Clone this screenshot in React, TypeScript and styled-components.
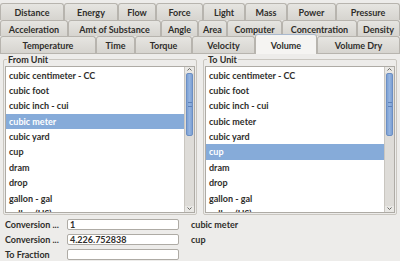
import React from 'react'
import styled, { createGlobalStyle } from 'styled-components'

const GlobalStyle = createGlobalStyle`
  html, body {
    margin: 0;
    padding: 0;
    background: #edecea;
  }
  * {
    box-sizing: border-box;
  }
`

const Window = styled.div`
  width: 400px;
  height: 261px;
  overflow: hidden;
  background: #edecea;
  font-family: Lato, 'Open Sans', sans-serif;
  font-weight: 700;
  font-size: 9px;
  color: #2f2e2b;
  display: flex;
  flex-direction: column;
  padding-top: 3px;
`

const TabRow = styled.div<{ $h: number }>`
  display: flex;
  height: ${({ $h }) => $h}px;
  position: relative;
`

const Tab = styled.div<{ $w: number; $active?: boolean }>`
  flex: 0 0 ${({ $w }) => $w}px;
  display: flex;
  align-items: center;
  justify-content: center;
  padding-top: 2px;
  border: 1px solid #b7b4ae;
  border-bottom: none;
  border-radius: 3px 3px 0 0;
  background: ${({ $active }) =>
    $active ? '#f5f4f2' : 'linear-gradient(#e6e5e1, #d6d4cf)'};
  border-top-color: ${({ $active }) => ($active ? '#a9b9cf' : '#b7b4ae')};
  margin-top: ${({ $active }) => ($active ? '-2px' : '0')};
  height: ${({ $active }) => ($active ? 'calc(100% + 3px)' : '100%')};
  position: ${({ $active }) => ($active ? 'relative' : 'static')};
  z-index: ${({ $active }) => ($active ? 2 : 0)};
  white-space: nowrap;
`

const Pane = styled.div`
  flex: 1;
  border-top: 1px solid #b7b4ae;
  padding: 0 3px;
  display: flex;
  flex-direction: column;
`

const Columns = styled.div`
  display: grid;
  grid-template-columns: 1fr 1fr;
  gap: 6px;
`

const Group = styled.fieldset`
  margin: 0;
  padding: 0 1px 1px 1px;
  border: 1px solid #c9c6c0;
  border-radius: 2px;
  min-width: 0;
`

const Legend = styled.legend`
  padding: 0 1px;
  margin-left: 2px;
  line-height: 11px;
`

const ListBox = styled.div`
  display: flex;
  height: 147px;
  border: 1px solid #aeaba5;
  background: #ffffff;
  margin-top: 1px;
`

const Items = styled.div`
  flex: 1;
  overflow: hidden;
  padding-top: 1px;
`

const Item = styled.div<{ $selected?: boolean }>`
  height: 15.4px;
  line-height: 15.4px;
  padding-left: 3px;
  background: ${({ $selected }) => ($selected ? '#86abd9' : 'transparent')};
  color: ${({ $selected }) => ($selected ? '#ffffff' : '#2f2e2b')};
  white-space: nowrap;
`

const ScrollBar = styled.div`
  width: 10px;
  border-left: 1px solid #c9c6c0;
  background: #dedcd8;
  display: flex;
  flex-direction: column;
`

const ArrowButton = styled.div`
  height: 6px;
  display: flex;
  align-items: center;
  justify-content: center;
  background: #e9e8e5;
`

const Track = styled.div`
  flex: 1;
  display: flex;
  flex-direction: column;
  padding: 0 1px;
`

const Thumb = styled.div`
  height: 63px;
  border-radius: 2px;
  background: linear-gradient(90deg, #7da1d4, #95b4e0, #7da1d4);
  border: 1px solid #6c8fc4;
  display: flex;
  align-items: center;
  justify-content: center;
`

const Grip = styled.div`
  width: 4px;
  height: 5px;
  border-top: 1px solid #5f82b8;
  border-bottom: 1px solid #5f82b8;
`

const Form = styled.div`
  display: grid;
  grid-template-columns: 60px 112px auto;
  column-gap: 2px;
  row-gap: 4px;
  margin-top: 4px;
  padding-left: 2px;
  align-items: center;
`

const Label = styled.div`
  white-space: nowrap;
  line-height: 11px;
`

const Input = styled.div`
  height: 11px;
  border: 1px solid #aeaba5;
  border-radius: 2px;
  background: #ffffff;
  padding-left: 2px;
  line-height: 9px;
`

const UnitText = styled.div`
  padding-left: 10px;
  line-height: 11px;
`

const Chevron = ({ up }: { up?: boolean }) => (
  <svg width="5" height="3" viewBox="0 0 5 3">
    <path d={up ? 'M0.5 2.5 L2.5 0.5 L4.5 2.5' : 'M0.5 0.5 L2.5 2.5 L4.5 0.5'} stroke="#5a5955" strokeWidth="0.9" fill="none" />
  </svg>
)

const tabRows: { h: number; tabs: [string, number][] }[] = [
  { h: 16.5, tabs: [['Distance', 64], ['Energy', 54], ['Flow', 38], ['Force', 47], ['Light', 42], ['Mass', 42], ['Power', 49], ['Pressure', 64]] },
  { h: 16.5, tabs: [['Acceleration', 68], ['Amt of Substance', 93], ['Angle', 37], ['Area', 29], ['Computer', 55], ['Concentration', 75], ['Density', 43]] },
  { h: 16.5, tabs: [['Temperature', 96], ['Time', 39], ['Torque', 57], ['Velocity', 63], ['Volume', 62], ['Volume Dry', 83]] },
]

const units = [
  'cubic centimeter - CC',
  'cubic foot',
  'cubic inch - cui',
  'cubic meter',
  'cubic yard',
  'cup',
  'dram',
  'drop',
  'gallon - gal',
  'gallon (US)',
]

const UnitList = ({ title, selected }: { title: string; selected: string }) => (
  <Group>
    <Legend>{title}</Legend>
    <ListBox>
      <Items>
        {units.map((u) => (
          <Item key={u} $selected={u === selected}>{u}</Item>
        ))}
      </Items>
      <ScrollBar>
        <ArrowButton><Chevron up /></ArrowButton>
        <Track>
          <Thumb><Grip /></Thumb>
        </Track>
        <ArrowButton><Chevron /></ArrowButton>
      </ScrollBar>
    </ListBox>
  </Group>
)

export default function App() {
  return (
    <Window>
      <GlobalStyle />
      {tabRows.map((row, i) => (
        <TabRow key={i} $h={row.h}>
          {row.tabs.map(([name, w]) => (
            <Tab key={name} $w={w} $active={name === 'Volume'}>{name}</Tab>
          ))}
        </TabRow>
      ))}
      <Pane>
        <Columns>
          <UnitList title="From Unit" selected="cubic meter" />
          <UnitList title="To Unit" selected="cup" />
        </Columns>
        <Form>
          <Label>Conversion ...</Label>
          <Input>1</Input>
          <UnitText>cubic meter</UnitText>
          <Label>Conversion ...</Label>
          <Input>4.226.752838</Input>
          <UnitText>cup</UnitText>
          <Label>To Fraction</Label>
          <Input />
          <UnitText />
        </Form>
      </Pane>
    </Window>
  )
}
